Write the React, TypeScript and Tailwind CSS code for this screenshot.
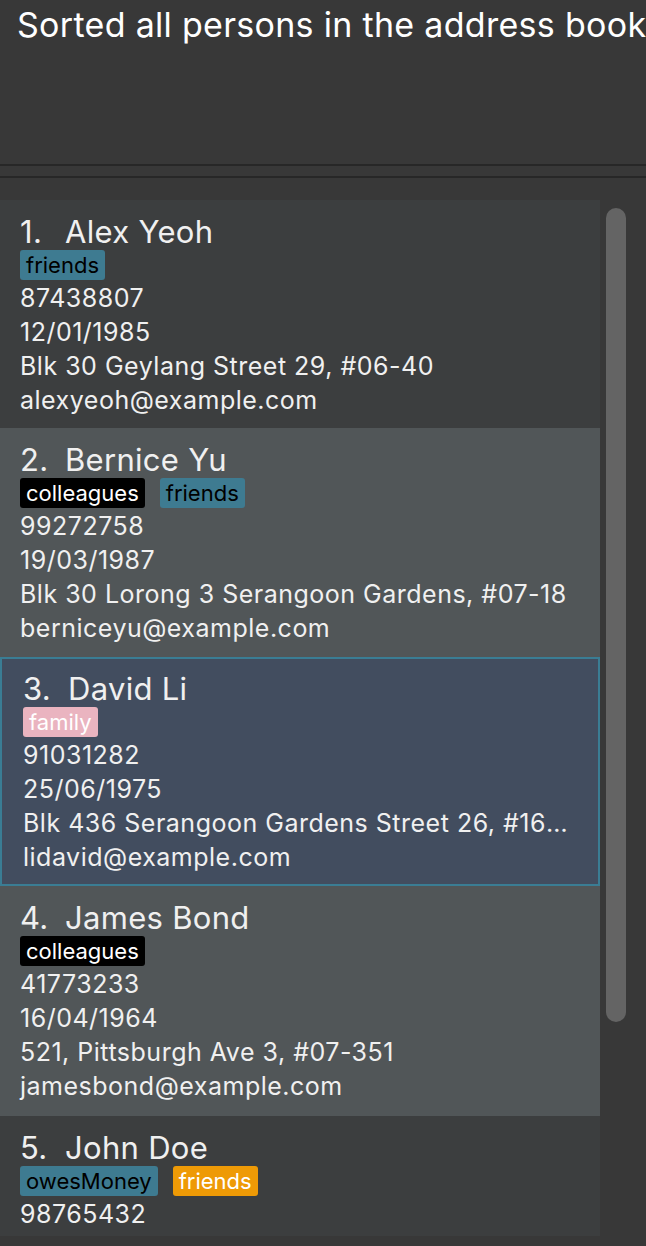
import React from 'react';

type Tag = { label: string; tone: 'teal' | 'black' | 'pink' | 'orange' };

interface Person {
  name: string;
  tags: Tag[];
  phone: string;
  birthday: string;
  address: string;
  email: string;
}

const persons: Person[] = [
  {
    name: 'Alex Yeoh',
    tags: [{ label: 'friends', tone: 'teal' }],
    phone: '87438807',
    birthday: '12/01/1985',
    address: 'Blk 30 Geylang Street 29, #06-40',
    email: 'alexyeoh@example.com',
  },
  {
    name: 'Bernice Yu',
    tags: [
      { label: 'colleagues', tone: 'black' },
      { label: 'friends', tone: 'teal' },
    ],
    phone: '99272758',
    birthday: '19/03/1987',
    address: 'Blk 30 Lorong 3 Serangoon Gardens, #07-18',
    email: 'berniceyu@example.com',
  },
  {
    name: 'David Li',
    tags: [{ label: 'family', tone: 'pink' }],
    phone: '91031282',
    birthday: '25/06/1975',
    address: 'Blk 436 Serangoon Gardens Street 26, #16-43',
    email: 'lidavid@example.com',
  },
  {
    name: 'James Bond',
    tags: [{ label: 'colleagues', tone: 'black' }],
    phone: '41773233',
    birthday: '16/04/1964',
    address: '521, Pittsburgh Ave 3, #07-351',
    email: 'jamesbond@example.com',
  },
  {
    name: 'John Doe',
    tags: [
      { label: 'owesMoney', tone: 'teal' },
      { label: 'friends', tone: 'orange' },
    ],
    phone: '98765432',
    birthday: '01/01/1990',
    address: '311, Clementi Ave 2, #02-25',
    email: 'johnd@example.com',
  },
];

const tagTone: Record<Tag['tone'], string> = {
  teal: 'bg-[#3e7b91] text-black',
  black: 'bg-black text-white',
  pink: 'bg-[#eab4c0] text-white',
  orange: 'bg-[#ee9a06] text-white',
};

// rows are not all the same height in the original list
const rowHeight = ['h-[228px]', 'h-[229px]', 'h-[229px]', 'h-[230px]', 'h-[229px]'];

function PersonCard({ person, index, selected }: { person: Person; index: number; selected: boolean }) {
  const bg = selected
    ? 'bg-[#424d5f] border-2 border-[#3a7d94] pt-[12px] pl-[21px] pr-[22px]'
    : index % 2 === 0
    ? 'bg-[#3c3e3f] pt-[14px] pl-[20px] pr-[24px]'
    : 'bg-[#515658] pt-[14px] pl-[20px] pr-[24px]';

  return (
    <div className={`w-[600px] shrink-0 overflow-hidden text-[#f0f0f0] ${rowHeight[index]} ${bg}`}>
      <div className="flex text-[31px] leading-[36px] tracking-[0.3px] whitespace-nowrap">
        <span className="w-[45px]">{index + 1}.</span>
        <span>{person.name}</span>
      </div>
      <div className="flex gap-[15px] h-[30px] mb-[1px]">
        {person.tags.map((t) => (
          <span
            key={t.label}
            className={`h-[30px] px-[6px] rounded-[3px] text-[22px] leading-[30px] ${tagTone[t.tone]}`}
          >
            {t.label}
          </span>
        ))}
      </div>
      <div className="text-[25px] leading-[34px] tracking-[0.5px]">
        <p>{person.phone}</p>
        <p>{person.birthday}</p>
        <p className="truncate">{person.address}</p>
        <p>{person.email}</p>
      </div>
    </div>
  );
}

export default function App() {
  return (
    <div
      className="w-[646px] h-[1246px] bg-[#383838] overflow-hidden"
      style={{ fontFamily: 'Inter, "Liberation Sans", sans-serif' }}
    >
      <div className="h-[164px] pl-[17px] pt-[3px]">
        <p className="text-[34px] leading-[44px] tracking-[0.3px] text-white whitespace-nowrap">
          Sorted all persons in the address book
        </p>
      </div>
      <div className="h-[2px] bg-[#272727]" />
      <div className="h-[10px]" />
      <div className="h-[2px] bg-[#272727]" />
      <div className="h-[22px]" />
      <div className="flex h-[1036px]">
        <div className="w-[600px] flex flex-col overflow-hidden">
          {persons.map((p, i) => (
            <PersonCard key={p.name} person={p} index={i} selected={i === 2} />
          ))}
        </div>
        <div className="w-[46px] pt-[8px] pl-[6px]">
          <div className="w-[20px] h-[814px] rounded-[10px] bg-[#646464]" />
        </div>
      </div>
    </div>
  );
}
